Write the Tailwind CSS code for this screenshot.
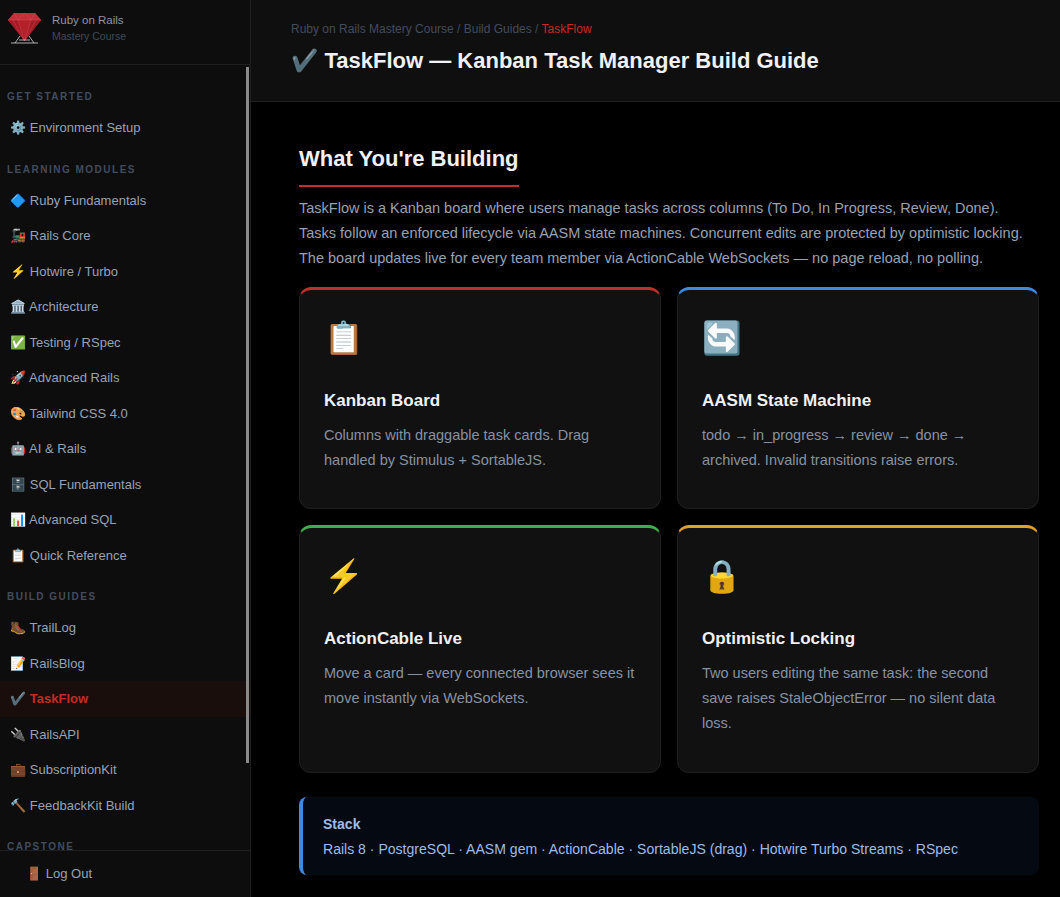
<!DOCTYPE html>
<html lang="en">
<head>
  <meta charset="UTF-8" />
  <script src="https://cdn.jsdelivr.net/npm/@tailwindcss/browser@4"></script>
  <title>TaskFlow</title>
</head>
<body class="bg-black font-['Liberation_Sans','Noto_Color_Emoji',sans-serif]">
  <div class="flex h-[897px] w-[1060px] overflow-hidden">

    <!-- Sidebar -->
    <aside class="relative flex w-[251px] shrink-0 flex-col border-r border-[#1f1f1f] bg-[#0d0d0d]">
      <div class="flex h-[65px] shrink-0 items-start border-b border-[#1f1f1f] pl-2">
        <svg class="mt-3 h-8 w-[34px] shrink-0" viewBox="0 0 34 32">
          <path d="M6 1H27L33 8L16.5 29L0 8Z" fill="#b3202a" />
          <path d="M6 1H27L33 8H0Z" fill="#c4303a" />
          <path d="M0 8L10 8L16.5 29ZM33 8L23 8L16.5 29Z" fill="#a51b25" />
          <path d="M6 1L10 8L16.5 1L23 8L27 1M0 8H33M10 8L16.5 29L23 8M5 8L16.5 29L28 8" fill="none" stroke="#d9525a" stroke-width="0.4" />
          <path d="M3 31H30M7 31L12 24M26 31L21 24M11 28H22" fill="none" stroke="#c0c0c0" stroke-width="0.9" />
        </svg>
        <div class="ml-[10px] mt-[13px]">
          <div class="text-[11.5px] leading-[15px] text-[#8e96a3]">Ruby on Rails</div>
          <div class="mt-[1px] text-[10.5px] leading-[15px] text-[#414a59]">Mastery Course</div>
        </div>
      </div>

      <nav class="min-h-0 flex-1 overflow-hidden text-[13px] text-[#98a2b3]">
        <h3 class="mt-[26px] mb-[7px] pl-[7px] text-[10px] font-bold leading-[12px] tracking-[1.5px] text-[#434c5c]">GET STARTED</h3>
        <a class="flex h-[35.5px] items-center pl-[10px]">⚙️ Environment Setup</a>

        <h3 class="mt-[18px] mb-[7px] pl-[7px] text-[10px] font-bold leading-[12px] tracking-[1.5px] text-[#434c5c]">LEARNING MODULES</h3>
        <a class="flex h-[35.5px] items-center pl-[10px]">🔷 Ruby Fundamentals</a>
        <a class="flex h-[35.5px] items-center pl-[10px]">🚂 Rails Core</a>
        <a class="flex h-[35.5px] items-center pl-[10px]">⚡ Hotwire / Turbo</a>
        <a class="flex h-[35.5px] items-center pl-[10px]">🏛️ Architecture</a>
        <a class="flex h-[35.5px] items-center pl-[10px]">✅ Testing / RSpec</a>
        <a class="flex h-[35.5px] items-center pl-[10px]">🚀 Advanced Rails</a>
        <a class="flex h-[35.5px] items-center pl-[10px]">🎨 Tailwind CSS 4.0</a>
        <a class="flex h-[35.5px] items-center pl-[10px]">🤖 AI &amp; Rails</a>
        <a class="flex h-[35.5px] items-center pl-[10px]">🗄️ SQL Fundamentals</a>
        <a class="flex h-[35.5px] items-center pl-[10px]">📊 Advanced SQL</a>
        <a class="flex h-[35.5px] items-center pl-[10px]">📋 Quick Reference</a>

        <h3 class="mt-[18px] mb-[7px] pl-[7px] text-[10px] font-bold leading-[12px] tracking-[1.5px] text-[#434c5c]">BUILD GUIDES</h3>
        <a class="flex h-[35.5px] items-center pl-[10px]">🥾 TrailLog</a>
        <a class="flex h-[35.5px] items-center pl-[10px]">📝 RailsBlog</a>
        <a class="flex h-[35.5px] items-center whitespace-pre bg-[#1a0e0c] pl-[10px]">✔️ <span class="font-bold text-[#c42b25]">TaskFlow</span></a>
        <a class="flex h-[35.5px] items-center pl-[10px]">🔌 RailsAPI</a>
        <a class="flex h-[35.5px] items-center pl-[10px]">💼 SubscriptionKit</a>
        <a class="flex h-[35.5px] items-center pl-[10px]">🔨 FeedbackKit Build</a>

        <h3 class="mt-[18px] pl-[7px] text-[10px] font-bold leading-[12px] tracking-[1.5px] text-[#434c5c]">CAPSTONE</h3>
      </nav>

      <div class="flex h-[47px] shrink-0 items-center border-t border-[#1f1f1f] pl-[26px] text-[13px] text-[#98a2b3]">🚪 Log Out</div>

      <!-- scrollbar thumb -->
      <div class="absolute left-[246px] top-[67px] h-[696px] w-[3px] bg-[#8a8a8a]"></div>
    </aside>

    <!-- Main -->
    <main class="min-w-0 flex-1">
      <header class="h-[102px] border-b border-[#1f1f1f] bg-[#0f0f0f] pl-10 pt-[21px]">
        <p class="text-[12px] leading-[16px] text-[#434c5c]">Ruby on Rails Mastery Course / Build Guides / <span class="text-[#c42b25]">TaskFlow</span></p>
        <h1 class="mt-[8px] text-[22px] font-bold leading-[32px] text-[#f0f0f5]">✔️ TaskFlow — Kanban Task Manager Build Guide</h1>
      </header>

      <div class="pl-12 pr-[21px]">
        <h2 class="mt-[41px] inline-block border-b-2 border-[#c0302a] pb-[11px] text-[22px] font-bold leading-[31px] text-[#f0f0f5]">What You're Building</h2>
        <p class="mt-[9px] text-[14.5px] leading-[25px] text-[#98a2b3]">TaskFlow is a Kanban board where users manage tasks across columns (To Do, In Progress, Review, Done). Tasks follow an enforced lifecycle via AASM state machines. Concurrent edits are protected by optimistic locking. The board updates live for every team member via ActionCable WebSockets — no page reload, no polling.</p>

        <div class="mt-[16px] grid grid-cols-2 gap-4">
          <div class="h-[222px] rounded-xl border border-t-[3px] border-[#1f1f1f] border-t-[#c0302a] bg-[#111111] px-6 pt-[25px]">
            <div class="text-[32px] leading-[46px]">📋</div>
            <h3 class="mt-[26px] text-[17px] font-bold leading-[28px] text-[#f0f0f5]">Kanban Board</h3>
            <p class="mt-[7.5px] text-[14.5px] leading-[25.375px] text-[#8791a3]">Columns with draggable task cards. Drag handled by Stimulus + SortableJS.</p>
          </div>
          <div class="h-[222px] rounded-xl border border-t-[3px] border-[#1f1f1f] border-t-[#3f8ae0] bg-[#111111] px-6 pt-[25px]">
            <div class="text-[32px] leading-[46px]">🔄</div>
            <h3 class="mt-[26px] text-[17px] font-bold leading-[28px] text-[#f0f0f5]">AASM State Machine</h3>
            <p class="mt-[7.5px] text-[14.5px] leading-[25.375px] text-[#8791a3]">todo → in_progress → review → done → archived. Invalid transitions raise errors.</p>
          </div>
          <div class="h-[248px] rounded-xl border border-t-[3px] border-[#1f1f1f] border-t-[#3fae4a] bg-[#111111] px-6 pt-[25px]">
            <div class="text-[32px] leading-[46px]">⚡</div>
            <h3 class="mt-[26px] text-[17px] font-bold leading-[28px] text-[#f0f0f5]">ActionCable Live</h3>
            <p class="mt-[7.5px] text-[14.5px] leading-[25.375px] text-[#8791a3]">Move a card — every connected browser sees it move instantly via WebSockets.</p>
          </div>
          <div class="h-[248px] rounded-xl border border-t-[3px] border-[#1f1f1f] border-t-[#e0a030] bg-[#111111] px-6 pt-[25px]">
            <div class="text-[32px] leading-[46px]">🔒</div>
            <h3 class="mt-[26px] text-[17px] font-bold leading-[28px] text-[#f0f0f5]">Optimistic Locking</h3>
            <p class="mt-[7.5px] text-[14.5px] leading-[25.375px] text-[#8791a3]">Two users editing the same task: the second save raises StaleObjectError — no silent data loss.</p>
          </div>
        </div>

        <div class="mt-6 h-[78px] rounded-lg border-l-4 border-[#3f8ae0] bg-[#050a12] pl-5 pt-[15px] text-[14.05px] leading-[25px] text-[#9dbbe8]">
          <div class="font-bold">Stack</div>
          <div>Rails 8 · PostgreSQL · AASM gem · ActionCable · SortableJS (drag) · Hotwire Turbo Streams · RSpec</div>
        </div>
      </div>
    </main>
  </div>
</body>
</html>
